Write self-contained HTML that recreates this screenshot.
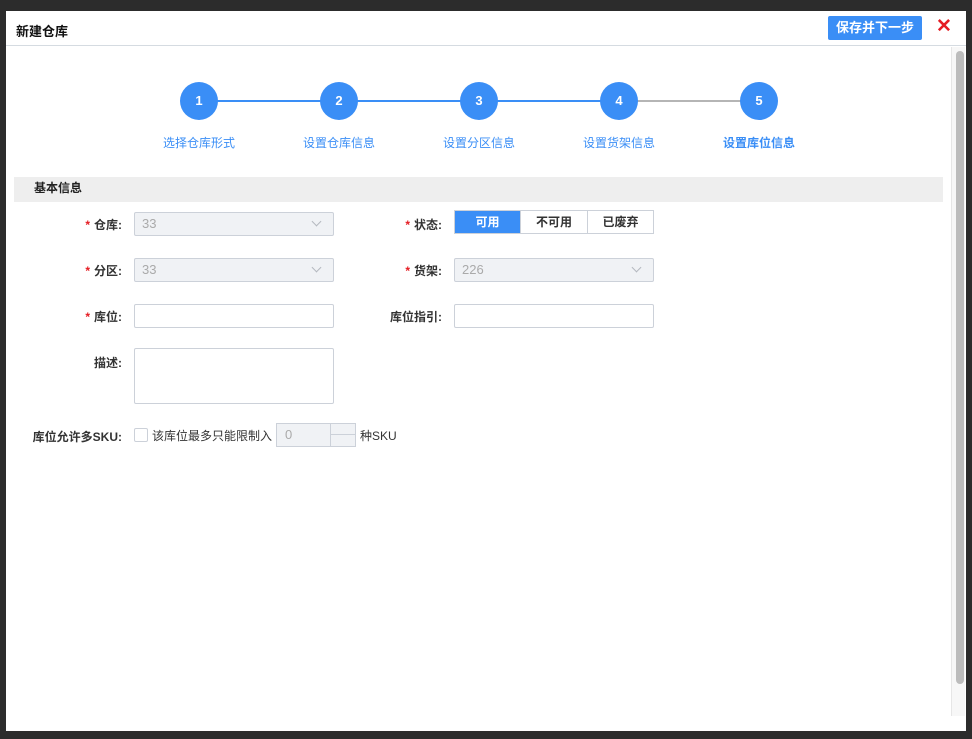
<!DOCTYPE html>
<html><head><meta charset="utf-8"><style>
*{box-sizing:border-box;margin:0;padding:0}
body{width:972px;height:739px;background:#2c2c2c;position:relative;overflow:hidden;font-family:"Liberation Sans","Noto Sans CJK SC",sans-serif;font-size:12px;color:#333}
.modal{position:absolute;left:6px;top:11px;width:960px;height:720px;background:#fff}
.hd{height:35px;border-bottom:1px solid #d5dbe1;position:relative}
.hd .t{position:absolute;left:10px;top:10px;font-size:13px;font-weight:bold;color:#111}
.btn{position:absolute;left:822px;top:5px;width:94px;height:24px;background:#3a8ef6;color:#fff;font-size:13px;font-weight:bold;text-align:center;line-height:24px;border-radius:2px}
.x{position:absolute;left:930px;top:5px;color:#e51c23;font-size:19px;font-weight:bold;line-height:22px}
.sb{position:absolute;left:945px;top:36px;width:14px;height:669px;background:#f7f7f7;border-left:1px solid #e6e6e6}
.sb i{position:absolute;left:4px;top:4px;width:8px;height:633px;background:#bcbcbc;border-radius:4px}
.ab{position:absolute}
.circ{width:38px;height:38px;border-radius:50%;background:#3a8ef6;color:#fff;font-weight:bold;font-size:13px;text-align:center;line-height:38px}
.lab{color:#3a8ef6;font-size:12px;width:100px;text-align:center}
.sec{position:absolute;left:8px;top:166px;width:929px;height:25px;background:#eeeeee;font-weight:bold;font-size:12px;padding-left:20px;line-height:23px;color:#222}
.lbl{position:absolute;font-size:12px;font-weight:bold;color:#333;text-align:right}
.lbl b{color:#e51c23;margin-right:4px}
.inp{position:absolute;width:200px;height:24px;border:1px solid #ccd1d9;border-radius:2px;background:#fff}
.dis{background:#f0f2f5;color:#aaa;padding-left:7px;line-height:22px;font-size:13px}
.dis:after{content:"";position:absolute;right:13px;top:5px;width:6px;height:6px;border-right:1px solid #b5b9c0;border-bottom:1px solid #b5b9c0;transform:rotate(45deg)}
.seg{position:absolute;left:448px;top:199px;height:24px;display:flex;border:1px solid #ccd1d9}
.seg span{display:block;height:22px;line-height:22px;text-align:center;font-weight:bold;font-size:12px;border-left:1px solid #ccd1d9}
</style></head><body>
<div class="modal">
<div class="hd"><div class="t">新建仓库</div><div class="btn">保存并下一步</div><div class="x">✕</div></div>
<div class="sb"><i></i></div>
<div class="ab" style="left:192px;top:89px;width:420px;height:2px;background:#3a8ef6"></div>
<div class="ab" style="left:612px;top:89px;width:140px;height:2px;background:#b5b5b5"></div>
<div class="ab circ" style="left:174px;top:71px">1</div>
<div class="ab circ" style="left:314px;top:71px">2</div>
<div class="ab circ" style="left:454px;top:71px">3</div>
<div class="ab circ" style="left:594px;top:71px">4</div>
<div class="ab circ" style="left:734px;top:71px">5</div>
<div class="ab lab" style="left:143px;top:123px">选择仓库形式</div>
<div class="ab lab" style="left:283px;top:123px">设置仓库信息</div>
<div class="ab lab" style="left:423px;top:123px">设置分区信息</div>
<div class="ab lab" style="left:563px;top:123px">设置货架信息</div>
<div class="ab lab" style="left:703px;top:123px;font-weight:bold">设置库位信息</div>
<div class="sec">基本信息</div>
<div class="lbl" style="left:20px;top:205px;width:96px"><b>*</b>仓库:</div>
<div class="inp dis" style="left:128px;top:201px">33</div>
<div class="lbl" style="left:340px;top:205px;width:96px"><b>*</b>状态:</div>
<div class="seg"><span style="width:65px;background:#3a8ef6;color:#fff;border-left:0">可用</span><span style="width:67px">不可用</span><span style="width:66px">已废弃</span></div>
<div class="lbl" style="left:20px;top:251px;width:96px"><b>*</b>分区:</div>
<div class="inp dis" style="left:128px;top:247px">33</div>
<div class="lbl" style="left:340px;top:251px;width:96px"><b>*</b>货架:</div>
<div class="inp dis" style="left:448px;top:247px">226</div>
<div class="lbl" style="left:20px;top:297px;width:96px"><b>*</b>库位:</div>
<div class="inp" style="left:128px;top:293px"></div>
<div class="lbl" style="left:340px;top:297px;width:96px">库位指引:</div>
<div class="inp" style="left:448px;top:293px"></div>
<div class="lbl" style="left:20px;top:343px;width:96px">描述:</div>
<div class="inp" style="left:128px;top:337px;height:56px"></div>
<div class="lbl" style="left:10px;top:417px;width:106px">库位允许多SKU:</div>
<div class="ab" style="left:128px;top:417px;width:14px;height:14px;border:1px solid #ccd1d9;border-radius:2px"></div>
<div class="ab" style="left:146px;top:416px;font-size:12px">该库位最多只能限制入</div>
<div class="ab" style="left:270px;top:412px;width:80px;height:24px;border:1px solid #ccd1d9;background:#f0f2f5;color:#aaa;font-size:13px;padding-left:8px;line-height:22px">0<div class="ab" style="left:53px;top:0;width:25px;height:22px;border-left:1px solid #ccd1d9"><div style="height:11px;border-bottom:1px solid #ccd1d9"></div></div></div>
<div class="ab" style="left:354px;top:416px;font-size:12px">种SKU</div>
</div>
</body></html>
